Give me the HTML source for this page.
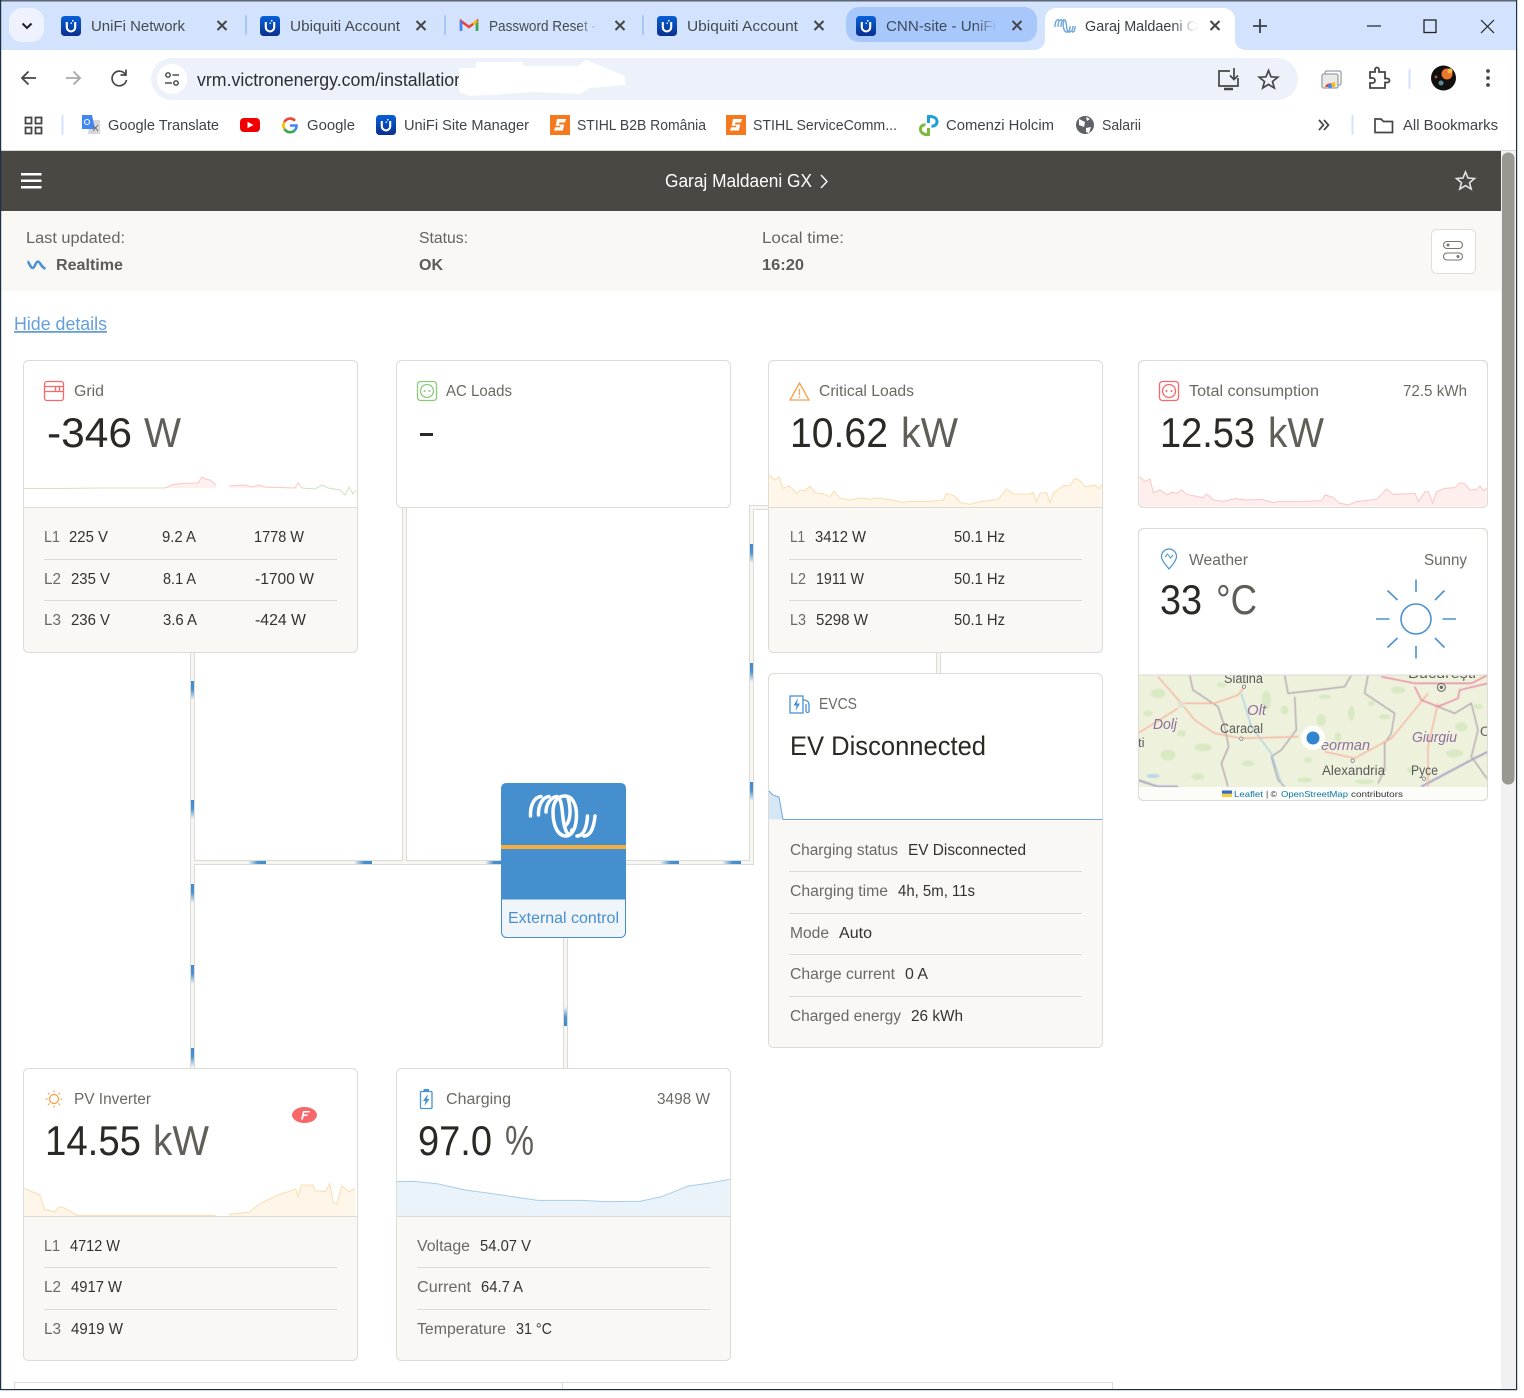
<!DOCTYPE html>
<html lang="en">
<head>
<meta charset="utf-8">
<title>Garaj Maldaeni GX</title>
<style>
html,body{margin:0;padding:0;background:#fff;width:1524px;height:1398px;overflow:hidden}
svg{display:block}
text{font-family:"Liberation Sans",Arial,sans-serif;white-space:pre}
.t{font-size:15px;fill:#444a50}
.bm{font-size:15px;fill:#3f4449}
.l{font-size:15.5px;fill:#6a6963}
.v{font-size:15.5px;fill:#33322e}
.s{font-size:16px;fill:#65645e}
.bd{font-size:16px;font-weight:bold;fill:#5c5b55}
.n{font-size:42px;fill:#2a2926}
.u{font-size:42px;fill:#5f5e58}
.m{font-size:13.5px;fill:#595959}
.mi{font-size:15px;font-style:italic;fill:#8f6f9d}
.x{stroke:#444746;stroke-width:2;fill:none}
.card{fill:#fff;stroke:#dcdbd6;stroke-width:1}
.sep{stroke:#dcdbd6;stroke-width:1}
.ic{fill:none;stroke-width:1.3}
</style>
</head>
<body>
<svg xmlns="http://www.w3.org/2000/svg" width="1524" height="1398" viewBox="0 0 1524 1398">
<defs>
<linearGradient id="ug" x1="0" y1="0" x2="0" y2="1"><stop offset="0" stop-color="#0660d8"/><stop offset="1" stop-color="#0a2f8e"/></linearGradient>
<linearGradient id="vd" x1="0" y1="0" x2="0" y2="1"><stop offset="0" stop-color="#3f8ccb"/><stop offset=".45" stop-color="#4a92d0"/><stop offset="1" stop-color="#4a92d0" stop-opacity="0"/></linearGradient>
<linearGradient id="vu" x1="0" y1="1" x2="0" y2="0"><stop offset="0" stop-color="#3f8ccb"/><stop offset=".45" stop-color="#4a92d0"/><stop offset="1" stop-color="#4a92d0" stop-opacity="0"/></linearGradient>
<linearGradient id="hd" x1="1" y1="0" x2="0" y2="0"><stop offset="0" stop-color="#3f8ccb"/><stop offset=".45" stop-color="#4a92d0"/><stop offset="1" stop-color="#4a92d0" stop-opacity="0"/></linearGradient>
<linearGradient id="f1" x1="0" y1="0" x2="1" y2="0"><stop offset="0" stop-color="#d3e3fd" stop-opacity="0"/><stop offset="1" stop-color="#d3e3fd"/></linearGradient>
<linearGradient id="f2" x1="0" y1="0" x2="1" y2="0"><stop offset="0" stop-color="#a8c7fa" stop-opacity="0"/><stop offset="1" stop-color="#a8c7fa"/></linearGradient>
<linearGradient id="f3" x1="0" y1="0" x2="1" y2="0"><stop offset="0" stop-color="#fff" stop-opacity="0"/><stop offset="1" stop-color="#fff"/></linearGradient>
<filter id="blr" x="-5%" y="-5%" width="110%" height="110%"><feGaussianBlur stdDeviation="1.4"/></filter>
<symbol id="uni" viewBox="0 0 20 20" overflow="visible">
<rect width="20" height="20" rx="3.5" fill="url(#ug)"/>
<path d="M5.8 6V11.2a4.2 4.2 0 0 0 8.4 0V6" fill="none" stroke="#fff" stroke-width="2.1"/>
<rect x="11" y="4" width="1.5" height="1.5" fill="#fff"/><rect x="9.5" y="6.500" width="1.5" height="1.5" fill="#cfe0ff"/>
</symbol>
<symbol id="st" viewBox="0 0 20 20" overflow="visible">
<rect width="20" height="20" fill="#f37a1f"/>
<path d="M7 4H16L15 7.5H9.5L9 9.5H14.2L12.8 15.5H4L5 12.2H10L10.5 10.8H5.7Z" fill="#fff"/>
</symbol>
<clipPath id="mapc"><path d="M1139 675H1487V795a5 5 0 0 1-5 5H1144a5 5 0 0 1-5-5Z"/></clipPath>
<clipPath id="urlc"><rect x="190" y="60" width="269" height="36"/></clipPath>
</defs>

<!-- window -->
<rect x="0" y="0" width="1517" height="1390" fill="#fff"/>
<rect x="0" y="0" width="1517" height="50" fill="#d3e3fd"/>
<rect x="0" y="0" width="1517" height="1.5" fill="#5d6673"/>

<!-- tabs -->
<rect x="9" y="8" width="35" height="34" rx="13" fill="#edf2fc"/>
<path d="M22.5 23.5L27 28L31.5 23.5" fill="none" stroke="#1f1f1f" stroke-width="2"/>
<rect x="846" y="7" width="191" height="35" rx="13" fill="#a8c7fa"/>
<path d="M1033 50C1040 50 1045 46 1045 40V20C1045 13 1050 8 1057 8H1223C1230 8 1235 13 1235 20V40C1235 46 1240 50 1247 50Z" fill="#fff"/>
<g fill="#a9c5f5"><rect x="245" y="15" width="2" height="20" rx="1"/><rect x="444" y="15" width="2" height="20" rx="1"/><rect x="642" y="15" width="2" height="20" rx="1"/></g>
<use href="#uni" x="61" y="16" width="20" height="20"/>
<text class="t" x="91" y="31" textLength="94" lengthAdjust="spacingAndGlyphs">UniFi Network</text>
<path class="x" d="M217.5 21L226.5 30M226.5 21L217.5 30"/>
<use href="#uni" x="260" y="16" width="20" height="20"/>
<text class="t" x="290" y="31" textLength="110" lengthAdjust="spacingAndGlyphs">Ubiquiti Account</text>
<path class="x" d="M416.5 21L425.5 30M425.5 21L416.5 30"/>
<g fill="none"><path d="M461 30V21L469 27L477 21V30" stroke="#ea4335" stroke-width="2.4"/><path d="M461 21V31" stroke="#4285f4" stroke-width="2.6"/><path d="M477 21V31" stroke="#34a853" stroke-width="2.6"/><path d="M473 24L477 21" stroke="#fbbc04" stroke-width="2.6"/></g>
<text class="t" x="489" y="31" textLength="107" lengthAdjust="spacingAndGlyphs">Password Reset -</text>
<rect x="578" y="16" width="20" height="20" fill="url(#f1)"/><rect x="597" y="16" width="11" height="20" fill="#d3e3fd"/>
<path class="x" d="M615.5 21L624.5 30M624.5 21L615.5 30"/>
<use href="#uni" x="657" y="16" width="20" height="20"/>
<text class="t" x="687" y="31" textLength="111" lengthAdjust="spacingAndGlyphs">Ubiquiti Account</text>
<path class="x" d="M814.5 21L823.5 30M823.5 21L814.5 30"/>
<use href="#uni" x="856" y="16" width="20" height="20"/>
<text class="t" x="886" y="31" textLength="110" lengthAdjust="spacingAndGlyphs" style="fill:#3c4a5c">CNN-site - UniFi</text>
<rect x="975" y="16" width="22" height="20" fill="url(#f2)"/>
<path class="x" d="M1012.5 21L1021.5 30M1021.5 21L1012.5 30"/>
<g fill="none" stroke="#6ca6da" stroke-width="1.4"><path d="M1055 27C1055 21 1057 19 1059 20"/><path d="M1058 27C1058 21 1060 19 1062 20"/><path d="M1061 27C1061 21 1063 19 1065 20C1067 22 1066 30 1068 32"/><path d="M1064 21C1062 25 1064 31 1066 32C1069 33 1070 30 1070 26"/><path d="M1069 32C1072 32 1073 29 1073 26"/><path d="M1072 32C1075 32 1075 29 1075 26"/></g>
<text class="t" x="1085" y="31" textLength="112" lengthAdjust="spacingAndGlyphs" style="fill:#3a3f44">Garaj Maldaeni C</text>
<rect x="1172" y="16" width="24" height="20" fill="url(#f3)"/>
<path class="x" d="M1210.5 21L1219.5 30M1219.5 21L1210.5 30"/>
<path d="M1260 19V33M1253 26H1267" stroke="#3a3f44" stroke-width="1.8" fill="none"/>
<path d="M1367 26H1381" stroke="#222" stroke-width="1.2"/>
<rect x="1424" y="20" width="12" height="12.500" fill="none" stroke="#222" stroke-width="1.3"/>
<path d="M1481 20L1494 33M1494 20L1481 33" stroke="#222" stroke-width="1.2"/>

<!-- toolbar -->
<path d="M1 150V58a8 8 0 0 1 8-8H1033V150Z" fill="#fff"/>
<path d="M1247 50H1508a8 8 0 0 1 8 8V150H1033V50Z" fill="#fff"/>
<path d="M36 78H22M28.5 71.5L22 78L28.5 84.5" fill="none" stroke="#444746" stroke-width="1.8"/>
<path d="M66 78H80M73.5 71.5L80 78L73.5 84.5" fill="none" stroke="#a5a7aa" stroke-width="1.8"/>
<path d="M125.5 74.5A7.3 7.3 0 1 0 126.5 80M126 69.5V75H120.5" fill="none" stroke="#444746" stroke-width="1.7"/>
<rect x="151" y="58" width="1147" height="42" rx="21" fill="#edf2fa"/>
<circle cx="172" cy="79" r="15" fill="#fff"/>
<g fill="none" stroke="#3d4043" stroke-width="1.4"><circle cx="168" cy="75" r="2.2"/><path d="M172.5 75H179"/><circle cx="176" cy="83" r="2.2"/><path d="M165 83H172"/></g>
<g clip-path="url(#urlc)"><text x="197" y="86" font-size="18" fill="#2b2f33" textLength="267" lengthAdjust="spacingAndGlyphs">vrm.victronenergy.com/installation</text></g>
<path d="M459 68H476V62H522L524 66H578L586 60L625 76V85L590 88L580 94L535 92L470 96L459 92Z" fill="#fff"/>
<g fill="none" stroke="#444746" stroke-width="1.7"><path d="M1230 71H1219V86H1238V78"/><path d="M1224 89H1233" stroke-width="2.5"/><path d="M1234 68V79M1230 75.500L1234 79.5L1238 75.5"/></g>
<path d="M1268.5 70.500L1271 76.800L1277.8 77.200L1272.5 81.500L1274.3 88L1268.5 84.400L1262.7 88L1264.5 81.500L1259.2 77.200L1266 76.800Z" fill="none" stroke="#444746" stroke-width="1.7"/>
<g fill="none" stroke="#9aa0a6" stroke-width="1.3"><rect x="1325" y="71" width="16" height="14" rx="1.5"/><rect x="1322" y="74" width="16" height="14" rx="1.5" fill="#e9e9e9"/></g>
<path d="M1325 87a5.200 5.200 0 0 1 10 0Z" fill="#ea4335"/><path d="M1330 87a5 5 0 0 1 5-5V87Z" fill="#fbbc04"/><circle cx="1330" cy="86" r="2" fill="#4285f4"/>
<path d="M1370 72H1375V69.5a2 2 0 0 1 4 0V72H1385V78.5H1387.5a2 2 0 0 1 0 4H1385V88H1370V83H1372.5a2.5 2.5 0 0 0 0-5H1370Z" fill="none" stroke="#444746" stroke-width="1.8"/>
<rect x="1408.5" y="69" width="2" height="20" rx="1" fill="#d3e3fd"/>
<ellipse cx="1443.5" cy="78" rx="12.5" ry="12.5" fill="#12100e"/>
<circle cx="1447" cy="74" r="5.5" fill="#e8762b"/><circle cx="1450" cy="71" r="2.5" fill="#f4c04a"/><circle cx="1441" cy="83" r="2.5" fill="#5a8a9a"/><circle cx="1436" cy="77" r="1.5" fill="#9b5a3a"/>
<g fill="#444746"><circle cx="1488" cy="71" r="1.9"/><circle cx="1488" cy="78" r="1.9"/><circle cx="1488" cy="85" r="1.9"/></g>

<!-- bookmarks -->
<g fill="none" stroke="#444746" stroke-width="1.8"><rect x="25.500" y="117.500" width="6" height="6"/><rect x="35.500" y="117.500" width="6" height="6"/><rect x="25.500" y="127.500" width="6" height="6"/><rect x="35.500" y="127.500" width="6" height="6"/></g>
<rect x="61.5" y="115" width="2" height="20" rx="1" fill="#d3e3fd"/>
<path d="M90 120H100V134H88Z" fill="#d5d7da"/><path d="M82 115H92L95 129H82Z" fill="#4285f4"/><circle cx="87" cy="122" r="2.5" fill="none" stroke="#fff" stroke-width="1.1"/><path d="M93 125L98 131M98 125L93 131" stroke="#777" stroke-width="1"/>
<text class="bm" x="108" y="130" textLength="111" lengthAdjust="spacingAndGlyphs">Google Translate</text>
<rect x="240" y="118" width="20" height="14" rx="4" fill="#f00000"/><path d="M247.5 121.8L253.5 125L247.5 128.2Z" fill="#fff"/>
<g fill="none" stroke-width="2.6"><path d="M295 120.8A6.5 6.5 0 0 0 284.4 122" stroke="#ea4335"/><path d="M284.4 122A6.5 6.5 0 0 0 284.5 129" stroke="#fbbc04"/><path d="M284.5 129A6.5 6.5 0 0 0 295 130" stroke="#34a853"/><path d="M295 130A6.5 6.5 0 0 0 296.5 125.5H290" stroke="#4285f4"/></g>
<text class="bm" x="307" y="130" textLength="48" lengthAdjust="spacingAndGlyphs">Google</text>
<use href="#uni" x="376" y="115" width="20" height="20"/>
<text class="bm" x="404" y="130" textLength="125" lengthAdjust="spacingAndGlyphs">UniFi Site Manager</text>
<use href="#st" x="550" y="115" width="20" height="20"/>
<text class="bm" x="577" y="130" textLength="129" lengthAdjust="spacingAndGlyphs">STIHL B2B România</text>
<use href="#st" x="726" y="115" width="20" height="20"/>
<text class="bm" x="753" y="130" textLength="144" lengthAdjust="spacingAndGlyphs">STIHL ServiceComm...</text>
<path d="M928.500 128V134.500C924 135 920.500 133 920.500 129C920.500 126 923 124.500 925.500 125" fill="none" stroke="#7dbb3f" stroke-width="3"/><path d="M928.500 123V116.500C933 116 937 118 937 121.500C937 125 934 126.500 931.500 126" fill="none" stroke="#1da0d8" stroke-width="3"/>
<text class="bm" x="946" y="130" textLength="108" lengthAdjust="spacingAndGlyphs">Comenzi Holcim</text>
<circle cx="1085" cy="125" r="9" fill="#5f6368"/><path d="M1079 119L1085 122L1084 127L1079 125ZM1086 128L1091 127L1089 133L1086 132ZM1086 117L1090 119L1087 121Z" fill="#fff"/>
<text class="bm" x="1102" y="130" textLength="39" lengthAdjust="spacingAndGlyphs">Salarii</text>
<path d="M1319 120L1323.5 125L1319 130M1324 120L1328.5 125L1324 130" fill="none" stroke="#444746" stroke-width="1.7"/>
<rect x="1351.5" y="115" width="2" height="20" rx="1" fill="#d3e3fd"/>
<path d="M1375 119H1381L1383.5 121.5H1392.5V132.5H1375Z" fill="none" stroke="#444746" stroke-width="1.7"/>
<text class="bm" x="1403" y="130" textLength="95" lengthAdjust="spacingAndGlyphs">All Bookmarks</text>

<!-- app header -->
<rect x="1" y="150" width="1516" height="1" fill="#d8d8d8"/>
<rect x="1" y="151" width="1500" height="60" fill="#494842"/>
<rect x="21" y="173" width="20.5" height="2.5" fill="#fff"/><rect x="21" y="179.5" width="20.5" height="2.5" fill="#fff"/><rect x="21" y="186" width="20.5" height="2.5" fill="#fff"/>
<text x="665" y="187" font-size="18" fill="#fff" textLength="147" lengthAdjust="spacingAndGlyphs">Garaj Maldaeni GX</text>
<path d="M821 175L827 181.5L821 188" fill="none" stroke="#fff" stroke-width="1.4"/>
<path d="M1465.5 172L1468 178L1474.5 178.5L1469.5 182.8L1471.2 189L1465.5 185.6L1459.8 189L1461.5 182.8L1456.5 178.5L1463 178Z" fill="none" stroke="#e6e5e1" stroke-width="1.6"/>

<!-- status bar -->
<rect x="1" y="211" width="1500" height="80" fill="#f9f8f5"/>
<text class="s" x="26" y="243" textLength="99" lengthAdjust="spacingAndGlyphs">Last updated:</text>
<path d="M27.5 261.5C29 262 30.500 268 32.500 268C35 268 35.500 261.500 38 261.500C40 261.500 42 268.500 45.500 268.500" fill="none" stroke="#4a92d0" stroke-width="2.600"/>
<text class="bd" x="56" y="270" textLength="67" lengthAdjust="spacingAndGlyphs">Realtime</text>
<text class="s" x="419" y="243" textLength="49" lengthAdjust="spacingAndGlyphs">Status:</text>
<text class="bd" x="419" y="270" textLength="24" lengthAdjust="spacingAndGlyphs">OK</text>
<text class="s" x="762" y="243" textLength="82" lengthAdjust="spacingAndGlyphs">Local time:</text>
<text class="bd" x="762" y="270" textLength="42" lengthAdjust="spacingAndGlyphs">16:20</text>
<rect x="1431.5" y="229.5" width="44" height="44" rx="5" fill="#fff" stroke="#dfdeda"/>
<g fill="none" stroke="#77766f" stroke-width="1.1"><rect x="1443.5" y="241.5" width="19" height="7" rx="3.5"/><rect x="1443.5" y="253" width="19" height="7" rx="3.5"/></g>
<circle cx="1448" cy="245" r="1.5" fill="#77766f"/><circle cx="1458" cy="256.5" r="1.5" fill="#77766f"/>

<text x="14" y="330" font-size="18" fill="#649fdb" textLength="93" lengthAdjust="spacingAndGlyphs" text-decoration="underline">Hide details</text>

<!-- pipes -->
<g fill="none" stroke="#dcdbd6" stroke-width="5">
<path d="M192.5 652V1068M192.5 862.5H501M404.5 507V862.5M565.5 938V1068M626 862.5H751.5V507.5H768M938.5 652V673"/>
</g>
<g fill="none" stroke="#f7f6f2" stroke-width="3">
<path d="M192.5 652V1068M192.5 862.5H501M404.5 507V862.5M565.5 938V1068M626 862.5H751.5V507.5H768M938.5 652V673"/>
</g>
<g>
<rect x="191" y="681" width="3" height="19" fill="url(#vd)"/><rect x="191" y="800" width="3" height="19" fill="url(#vd)"/><rect x="191" y="884" width="3" height="19" fill="url(#vd)"/><rect x="191" y="965" width="3" height="19" fill="url(#vd)"/><rect x="191" y="1048" width="3" height="19" fill="url(#vd)"/>
<rect x="248" y="861" width="18" height="3" fill="url(#hd)"/><rect x="354" y="861" width="18" height="3" fill="url(#hd)"/><rect x="485" y="861" width="16" height="3" fill="url(#hd)"/><rect x="660" y="861" width="19" height="3" fill="url(#hd)"/><rect x="722" y="861" width="19" height="3" fill="url(#hd)"/>
<rect x="750" y="544" width="3" height="19" fill="url(#vd)"/><rect x="750" y="663" width="3" height="19" fill="url(#vd)"/><rect x="750" y="782" width="3" height="19" fill="url(#vd)"/>
<rect x="564" y="1007" width="3" height="19" fill="url(#vu)"/>
</g>

<!-- Grid card -->
<rect class="card" x="23.5" y="360.5" width="334" height="292" rx="5"/>
<path d="M24 507.5H357V647a5 5 0 0 1-5 5H29a5 5 0 0 1-5-5Z" fill="#f9f8f5"/>
<path d="M24 507.5H357" class="sep"/>
<g class="ic" stroke="#f8686a"><rect x="44.5" y="381.5" width="19" height="19" rx="2.5"/><path d="M44.5 386.5H63.5M44.5 391.5H63.5M55.5 387V391M59.5 387V391"/></g>
<text class="l" x="74" y="396" textLength="30" lengthAdjust="spacingAndGlyphs">Grid</text>
<text class="n" x="47" y="447" textLength="85" lengthAdjust="spacingAndGlyphs">-346</text><text class="u" x="144" y="447" textLength="37" lengthAdjust="spacingAndGlyphs">W</text>
<path d="M165 488L172 485L180 483.5L198 483L202 477L205 479L210 480L216 485V488ZM229 488V486L243 485L252 487L259 485L265 487L295 488Z" fill="#fdf0ef"/>
<g fill="none" stroke-width="1"><path d="M24 488.5L60 488.5L100 488L165 488" stroke="#e0dcc2"/><path d="M165 488L172 485L180 483.5L198 483L202 477L205 479L210 480L216 485M229 486L243 485L252 487L259 485L265 487L295 488L298 483L302 488" stroke="#f9c8c4"/><path d="M302 488L315 489L322 485L328 488L340 490L345 495L349 487L353 494L356 490" stroke="#cfe2bd"/></g>
<text class="l" x="44" y="542" textLength="16" lengthAdjust="spacingAndGlyphs">L1</text><text class="v" x="69" y="542" textLength="39" lengthAdjust="spacingAndGlyphs">225 V</text><text class="v" x="162" y="542" textLength="34" lengthAdjust="spacingAndGlyphs">9.2 A</text><text class="v" x="254" y="542" textLength="50" lengthAdjust="spacingAndGlyphs">1778 W</text>
<path class="sep" d="M44 559.5H337M44 600.5H337"/>
<text class="l" x="44" y="584" textLength="17" lengthAdjust="spacingAndGlyphs">L2</text><text class="v" x="71" y="584" textLength="39" lengthAdjust="spacingAndGlyphs">235 V</text><text class="v" x="163" y="584" textLength="33" lengthAdjust="spacingAndGlyphs">8.1 A</text><text class="v" x="255" y="584" textLength="59" lengthAdjust="spacingAndGlyphs">-1700 W</text>
<text class="l" x="44" y="625" textLength="17" lengthAdjust="spacingAndGlyphs">L3</text><text class="v" x="71" y="625" textLength="39" lengthAdjust="spacingAndGlyphs">236 V</text><text class="v" x="163" y="625" textLength="34" lengthAdjust="spacingAndGlyphs">3.6 A</text><text class="v" x="255" y="625" textLength="51" lengthAdjust="spacingAndGlyphs">-424 W</text>

<!-- AC loads -->
<rect class="card" x="396.5" y="360.5" width="334" height="147" rx="5"/>
<g class="ic" stroke="#8dc97a"><rect x="417.5" y="381.5" width="19" height="19" rx="3"/><circle cx="427" cy="391" r="6.5"/></g><circle cx="424.5" cy="391" r="1" fill="#8dc97a"/><circle cx="429.5" cy="391" r="1" fill="#8dc97a"/>
<text class="l" x="446" y="396" textLength="66" lengthAdjust="spacingAndGlyphs">AC Loads</text>
<rect x="420" y="433" width="13" height="3" fill="#2a2926"/>

<!-- Critical loads -->
<rect class="card" x="768.5" y="360.5" width="334" height="292" rx="5"/>
<path d="M769 507.5H1102V647a5 5 0 0 1-5 5H774a5 5 0 0 1-5-5Z" fill="#f9f8f5"/>
<g transform="translate(760 350) scale(.33333)"><path d="M27 375L45 390L58 380L68 415L88 408L110 430L120 420L135 422L150 408L165 428L190 432L210 440L222 423L240 445L270 450L300 444L330 448L350 444L395 450L430 458L440 454L510 454L550 450L560 430L585 438L600 458L630 463L655 456L715 448L740 417L760 432L805 433L820 428L830 456L840 430L860 428L870 458L880 430L910 407L930 407L945 385L960 392L975 410L1005 406L1017 416L1025 403V472H27Z" fill="#fff6ea"/><path d="M27 375L45 390L58 380L68 415L88 408L110 430L120 420L135 422L150 408L165 428L190 432L210 440L222 423L240 445L270 450L300 444L330 448L350 444L395 450L430 458L440 454L510 454L550 450L560 430L585 438L600 458L630 463L655 456L715 448L740 417L760 432L805 433L820 428L830 456L840 430L860 428L870 458L880 430L910 407L930 407L945 385L960 392L975 410L1005 406L1017 416L1025 403" fill="none" stroke="#fcdcae" stroke-width="3"/></g>
<path d="M769 507.5H1102" class="sep"/>
<g class="ic" stroke="#f7a24b"><path d="M799.5 383L809 400H790Z"/><path d="M799.5 389V395M799.5 396.5V398"/></g>
<text class="l" x="819" y="396" textLength="95" lengthAdjust="spacingAndGlyphs">Critical Loads</text>
<text class="n" x="790" y="447" textLength="98" lengthAdjust="spacingAndGlyphs">10.62</text><text class="u" x="901" y="447" textLength="57" lengthAdjust="spacingAndGlyphs">kW</text>
<text class="l" x="790" y="542" textLength="15" lengthAdjust="spacingAndGlyphs">L1</text><text class="v" x="815" y="542" textLength="51" lengthAdjust="spacingAndGlyphs">3412 W</text><text class="v" x="954" y="542" textLength="51" lengthAdjust="spacingAndGlyphs">50.1 Hz</text>
<path class="sep" d="M789 559.5H1082M789 600.5H1082"/>
<text class="l" x="790" y="584" textLength="16" lengthAdjust="spacingAndGlyphs">L2</text><text class="v" x="816" y="584" textLength="48" lengthAdjust="spacingAndGlyphs">1911 W</text><text class="v" x="954" y="584" textLength="51" lengthAdjust="spacingAndGlyphs">50.1 Hz</text>
<text class="l" x="790" y="625" textLength="16" lengthAdjust="spacingAndGlyphs">L3</text><text class="v" x="816" y="625" textLength="52" lengthAdjust="spacingAndGlyphs">5298 W</text><text class="v" x="954" y="625" textLength="51" lengthAdjust="spacingAndGlyphs">50.1 Hz</text>

<!-- EVCS -->
<rect class="card" x="768.5" y="673.5" width="334" height="374" rx="5"/>
<path d="M769 820H1102V1042a5 5 0 0 1-5 5H774a5 5 0 0 1-5-5Z" fill="#f9f8f5"/>
<path d="M769 791L773 795L779 797L783 819.5H769Z" fill="#d6e6f5"/>
<path d="M769 791L773 795L779 797L783 819.5H1102" fill="none" stroke="#6fa8dc" stroke-width="1"/>
<g class="ic" stroke="#4a92d0"><rect x="790" y="696" width="13" height="17"/><path d="M803.5 700C807 700 809 702 809 705V711a1.5 1.5 0 0 1-3 0V704"/></g><path d="M798 698L793.5 705.5H796.5L795.5 711L800 703.5H797Z" fill="#4a92d0"/>
<text class="l" x="819" y="709" textLength="38" lengthAdjust="spacingAndGlyphs">EVCS</text>
<text x="790" y="755" font-size="26.5" fill="#2a2926" textLength="196" lengthAdjust="spacingAndGlyphs">EV Disconnected</text>
<text class="l" x="790" y="855" textLength="108" lengthAdjust="spacingAndGlyphs">Charging status</text><text class="v" x="908" y="855" textLength="118" lengthAdjust="spacingAndGlyphs">EV Disconnected</text>
<text class="l" x="790" y="896" textLength="98" lengthAdjust="spacingAndGlyphs">Charging time</text><text class="v" x="898" y="896" textLength="77" lengthAdjust="spacingAndGlyphs">4h, 5m, 11s</text>
<text class="l" x="790" y="938" textLength="39" lengthAdjust="spacingAndGlyphs">Mode</text><text class="v" x="839" y="938" textLength="33" lengthAdjust="spacingAndGlyphs">Auto</text>
<text class="l" x="790" y="979" textLength="105" lengthAdjust="spacingAndGlyphs">Charge current</text><text class="v" x="905" y="979" textLength="23" lengthAdjust="spacingAndGlyphs">0 A</text>
<text class="l" x="790" y="1021" textLength="111" lengthAdjust="spacingAndGlyphs">Charged energy</text><text class="v" x="911" y="1021" textLength="52" lengthAdjust="spacingAndGlyphs">26 kWh</text>
<path class="sep" d="M789 871.5H1082M789 913.5H1082M789 954.5H1082M789 996.5H1082"/>

<!-- Total -->
<rect class="card" x="1138.5" y="360.5" width="349" height="147" rx="5"/>
<g transform="translate(1130 360) scale(.33333)"><path d="M28 350L45 365L60 357L70 398L90 390L112 405L125 397L140 400L155 390L170 403L195 408L218 413L230 402L250 420L280 424L315 416L345 420L395 418L430 428L450 424L520 424L575 422L585 405L610 412L625 428L655 435L680 425L740 418L770 387L790 403L855 400L865 425L885 395L895 395L908 430L920 395L945 385L975 383L990 368L1005 372L1020 390L1040 388L1050 378L1060 392L1070 385V426a14 14 0 0 1-14 14H42a14 14 0 0 1-14-14Z" fill="#feefee"/><path d="M28 350L45 365L60 357L70 398L90 390L112 405L125 397L140 400L155 390L170 403L195 408L218 413L230 402L250 420L280 424L315 416L345 420L395 418L430 428L450 424L520 424L575 422L585 405L610 412L625 428L655 435L680 425L740 418L770 387L790 403L855 400L865 425L885 395L895 395L908 430L920 395L945 385L975 383L990 368L1005 372L1020 390L1040 388L1050 378L1060 392L1070 385" fill="none" stroke="#fbc6c2" stroke-width="3"/></g>
<rect x="1138.5" y="360.5" width="349" height="147" rx="5" fill="none" stroke="#dcdbd6"/>
<g class="ic" stroke="#f8686a"><rect x="1159.5" y="381.5" width="19" height="19" rx="3"/><circle cx="1169" cy="391" r="6.5"/></g><circle cx="1166.5" cy="391" r="1" fill="#f8686a"/><circle cx="1171.5" cy="391" r="1" fill="#f8686a"/>
<text class="l" x="1189" y="396" textLength="130" lengthAdjust="spacingAndGlyphs">Total consumption</text>
<text class="l" x="1403" y="396" textLength="64" lengthAdjust="spacingAndGlyphs">72.5 kWh</text>
<text class="n" x="1160" y="447" textLength="95" lengthAdjust="spacingAndGlyphs">12.53</text><text class="u" x="1268" y="447" textLength="56" lengthAdjust="spacingAndGlyphs">kW</text>

<!-- Weather -->
<rect class="card" x="1138.5" y="528.5" width="349" height="272" rx="5"/>
<path d="M1169 569C1165 564 1161.5 560 1161.5 556.5a7.500 7.500 0 0 1 15 0C1176.5 560 1173 564 1169 569Z" fill="none" stroke="#4a92d0" stroke-width="1.2"/>
<path d="M1165 557L1167.5 554L1170.5 558L1173 555" fill="none" stroke="#4a92d0" stroke-width="1"/>
<text class="l" x="1189" y="565" textLength="59" lengthAdjust="spacingAndGlyphs">Weather</text>
<text class="l" x="1424" y="565" textLength="43" lengthAdjust="spacingAndGlyphs">Sunny</text>
<text class="n" x="1160" y="614" textLength="42" lengthAdjust="spacingAndGlyphs">33</text><text class="u" x="1216" y="614" textLength="41" lengthAdjust="spacingAndGlyphs">°C</text>
<g fill="none" stroke="#4a92d0" stroke-width="1.6"><circle cx="1416" cy="619" r="15"/><path d="M1416 579.5V592M1416 646V658.5M1376 619H1389.5M1442.5 619H1456M1387.5 590.5L1397.5 600M1444.5 590.5L1435 600M1387.5 647.5L1397.5 638M1444.5 647.5L1435 638"/></g>

<!-- map -->
<g clip-path="url(#mapc)">
<rect x="1139" y="675" width="349" height="126" fill="#eef1dc"/>
<g transform="translate(1138 670) scale(.33333)" filter="url(#blr)">
<g fill="#d9e9c4">
<ellipse cx="195" cy="232" rx="26" ry="12"/><ellipse cx="90" cy="255" rx="22" ry="16"/><ellipse cx="560" cy="80" rx="18" ry="7"/><ellipse cx="740" cy="140" rx="18" ry="8"/><ellipse cx="640" cy="130" rx="10" ry="22"/><ellipse cx="385" cy="90" rx="14" ry="28"/><ellipse cx="60" cy="70" rx="22" ry="14"/><ellipse cx="950" cy="250" rx="26" ry="12"/><ellipse cx="550" cy="150" rx="14" ry="18"/><ellipse cx="780" cy="60" rx="22" ry="10"/><ellipse cx="180" cy="320" rx="20" ry="10"/><ellipse cx="500" cy="330" rx="22" ry="8"/><ellipse cx="680" cy="335" rx="30" ry="7"/><ellipse cx="970" cy="170" rx="18" ry="14"/>
<ellipse cx="30" cy="130" rx="14" ry="9"/><ellipse cx="250" cy="45" rx="14" ry="7"/><ellipse cx="330" cy="280" rx="18" ry="9"/><ellipse cx="600" cy="200" rx="10" ry="14"/><ellipse cx="700" cy="100" rx="10" ry="9"/><ellipse cx="820" cy="300" rx="14" ry="9"/><ellipse cx="440" cy="120" rx="12" ry="14"/><ellipse cx="130" cy="190" rx="14" ry="10"/><ellipse cx="510" cy="270" rx="12" ry="8"/><ellipse cx="1020" cy="110" rx="14" ry="8"/>
</g>
<ellipse cx="45" cy="318" rx="20" ry="6" fill="#b7d8e8"/>
<g fill="none" stroke="#a89aa8" stroke-width="3.5">
<path d="M155 15L165 60L240 110L260 170L272 230L250 280L270 350"/><path d="M440 15L450 70L540 60L620 50L640 15"/><path d="M470 80L475 180L430 240L400 260L420 330L440 350"/><path d="M690 15L680 70L770 130L760 190L740 220L740 300L720 340"/><path d="M850 90L950 130L1000 100L1020 180L1000 260L1050 330"/>
</g>
<path d="M310 70L340 170L400 250L430 340" fill="none" stroke="#a8d2e4" stroke-width="4"/>
<path d="M0 330L60 350H120M850 350L1000 270L1050 245" fill="none" stroke="#aba6c4" stroke-width="6"/>
<g fill="none" stroke="#f5b29c" stroke-width="4">
<path d="M60 20L130 100L170 150L230 190L310 205L480 200M0 190L120 115"/><path d="M130 100L230 100L300 75L320 50"/><path d="M560 245L650 265L760 205L830 120L870 70"/><path d="M900 100L870 230L870 350"/>
</g>
<g fill="none" stroke="#e8809f" stroke-width="4"><path d="M730 20L830 40L1000 40L1050 15"/><path d="M830 50L850 90L900 110L960 85L965 60L1050 40"/></g>
<rect x="120" y="95" width="20" height="18" fill="#e6dfd2"/>
</g>
<g transform="translate(1138 670) scale(.33333)">
<g fill="#fff" stroke="#777" stroke-width="2.5"><circle cx="318" cy="50" r="5"/><circle cx="310" cy="206" r="5"/><circle cx="644" cy="272" r="5"/><circle cx="858" cy="326" r="5"/></g>
<circle cx="910" cy="52" r="12" fill="none" stroke="#666" stroke-width="3"/><circle cx="910" cy="52" r="5" fill="#666"/>
</g>
<text class="m" x="1224" y="683" textLength="39" lengthAdjust="spacingAndGlyphs">Slatina</text>
<text class="m" x="1408" y="678" textLength="68" lengthAdjust="spacingAndGlyphs">București</text>
<text class="mi" x="1247" y="715" textLength="19" lengthAdjust="spacingAndGlyphs">Olt</text>
<text class="mi" x="1153" y="729" textLength="24" lengthAdjust="spacingAndGlyphs">Dolj</text>
<text class="m" x="1220" y="733" textLength="43" lengthAdjust="spacingAndGlyphs">Caracal</text>
<text x="1138" y="747" font-size="13" fill="#5b5b5b">ti</text>
<text class="mi" x="1321" y="750" textLength="49" lengthAdjust="spacingAndGlyphs">eorman</text>
<text class="m" x="1322" y="775" textLength="63" lengthAdjust="spacingAndGlyphs">Alexandria</text>
<text class="mi" x="1412" y="742" textLength="45" lengthAdjust="spacingAndGlyphs">Giurgiu</text>
<text class="m" x="1411" y="775" textLength="27" lengthAdjust="spacingAndGlyphs">Pyce</text>
<text class="m" x="1480" y="736">O</text>
<rect x="1139" y="787" width="349" height="14" fill="#fff" fill-opacity=".82"/>
<rect x="1222" y="790.5" width="10" height="3.3" fill="#3568c4"/><rect x="1222" y="793.8" width="10" height="3.3" fill="#f6cf3a"/>
<text x="1234" y="797" font-size="8.500" fill="#0a78a8" textLength="29" lengthAdjust="spacingAndGlyphs">Leaflet</text>
<text x="1266" y="797" font-size="8.500" fill="#333">| ©</text>
<text x="1281" y="797" font-size="8.500" fill="#0a78a8" textLength="67" lengthAdjust="spacingAndGlyphs">OpenStreetMap</text>
<text x="1351" y="797" font-size="8.500" fill="#333" textLength="52" lengthAdjust="spacingAndGlyphs">contributors</text>
<circle cx="1313" cy="738" r="12" fill="#fff"/><circle cx="1313" cy="738" r="6.5" fill="#2f86cf"/>
</g>
<rect x="1138.5" y="528.5" width="349" height="272" rx="5" fill="none" stroke="#dcdbd6"/>
<path d="M1139 675H1487" stroke="#dcdbd6"/>

<!-- Controller -->
<path d="M501 788a5 5 0 0 1 5-5H621a5 5 0 0 1 5 5V899H501Z" fill="#458fce"/>
<rect x="501" y="845" width="125" height="4" fill="#f8ac3b"/>
<path d="M501.5 899H625.5V932.5a5 5 0 0 1-5 5H506.5a5 5 0 0 1-5-5Z" fill="#f0f5fa" stroke="#458fce"/>
<text x="508" y="923" font-size="15.5" fill="#4790d0" textLength="111" lengthAdjust="spacingAndGlyphs">External control</text>
<g fill="none" stroke="#fff" stroke-linecap="round" stroke-width="3.5">
<path d="M530.5 816C530 806 534 797 541 796.5"/><path d="M538.5 815C538 805 543 797 549 796.5"/><path d="M546 812C546 804 551 797 557 796.500"/>
<path d="M553 812C553 800 559 796 565 796C573 796 576.500 806 576.500 815C576.500 828 572 836 566 836C558 836 553 826 553 812"/>
<path d="M560 800C563 806 562 820 565 828C567 835 571 837 572 830"/>
<path d="M568 798C571 808 571 820 566 825"/>
<path d="M577 836C584 836 587 826 587.500 816"/><path d="M584 836C591 836 594 826 595 816"/>
</g>

<!-- PV -->
<rect class="card" x="23.5" y="1068.5" width="334" height="292" rx="5"/>
<path d="M24 1216.5H357V1355a5 5 0 0 1-5 5H29a5 5 0 0 1-5-5Z" fill="#f9f8f5"/>
<g transform="translate(0 1060) scale(.4847 .33333)">
<path d="M50 385L82 405L92 448L112 456L122 441L130 442L160 466L445 466V468H50Z" fill="#fff6ea"/>
<path d="M472 463L515 456L535 432L570 407L610 387L615 410L622 375L645 375L650 392L672 395L680 370L688 428L695 433L705 378L720 395L733 385V468H472Z" fill="#fff6ea"/>
<g fill="none" stroke="#fcdcae" stroke-width="1">
<path vector-effect="non-scaling-stroke" d="M50 385L82 405L92 448L112 456L122 441L130 442L160 466L445 466"/>
<path vector-effect="non-scaling-stroke" d="M472 463L515 456L535 432L570 407L610 387L615 410L622 375L645 375L650 392L672 395L680 370L688 428L695 433L705 378L720 395L733 385"/>
</g>
</g>
<path class="sep" d="M24 1216.5H357"/>
<circle cx="54" cy="1099" r="4.5" fill="none" stroke="#f7a24b" stroke-width="1.3"/>
<path d="M54 1090.5V1092.5M54 1105.5V1107.5M45.5 1099H47.5M60.5 1099H62.5M48 1093L49.5 1094.5M60 1093L58.5 1094.5M48 1105L49.5 1103.5M60 1105L58.5 1103.5" stroke="#f7a24b" stroke-width="1.2"/>
<text class="l" x="74" y="1104" textLength="77" lengthAdjust="spacingAndGlyphs">PV Inverter</text>
<ellipse cx="304.5" cy="1115" rx="12.5" ry="8" fill="#f8686a"/>
<path d="M301 1119.5L303 1111H310L309.5 1112.5H304.5L304 1114.5H308L307.5 1116H303.7L303 1119.5Z" fill="#fff"/>
<text class="n" x="45" y="1155" textLength="96" lengthAdjust="spacingAndGlyphs">14.55</text><text class="u" x="153" y="1155" textLength="56" lengthAdjust="spacingAndGlyphs">kW</text>
<text class="l" x="44" y="1251" textLength="16" lengthAdjust="spacingAndGlyphs">L1</text><text class="v" x="70" y="1251" textLength="50" lengthAdjust="spacingAndGlyphs">4712 W</text>
<text class="l" x="44" y="1292" textLength="17" lengthAdjust="spacingAndGlyphs">L2</text><text class="v" x="71" y="1292" textLength="51" lengthAdjust="spacingAndGlyphs">4917 W</text>
<text class="l" x="44" y="1334" textLength="17" lengthAdjust="spacingAndGlyphs">L3</text><text class="v" x="71" y="1334" textLength="52" lengthAdjust="spacingAndGlyphs">4919 W</text>
<path class="sep" d="M44 1267.5H337M44 1309.5H337"/>

<!-- Charging -->
<rect class="card" x="396.5" y="1068.5" width="334" height="292" rx="5"/>
<path d="M397 1216.5H730V1355a5 5 0 0 1-5 5H402a5 5 0 0 1-5-5Z" fill="#f9f8f5"/>
<g transform="translate(0 1060) scale(.4847 .33333)"><path d="M819 365L855 364L905 372L960 390L1030 404L1110 421L1200 421L1250 425L1320 424L1365 410L1420 378L1460 370L1505 358V468H819Z" fill="#ebf3fa"/><path vector-effect="non-scaling-stroke" d="M819 365L855 364L905 372L960 390L1030 404L1110 421L1200 421L1250 425L1320 424L1365 410L1420 378L1460 370L1505 358" fill="none" stroke="#a9cde9" stroke-width="1"/></g>
<path class="sep" d="M397 1216.5H730"/>
<rect x="420.5" y="1091.5" width="11.5" height="17" rx="1" fill="none" stroke="#4a92d0" stroke-width="1.3"/><rect x="423.5" y="1089" width="5.5" height="2.5" fill="#4a92d0"/>
<path d="M428 1094L423 1101H425.5L424.5 1106L429.5 1099H427Z" fill="#4a92d0"/>
<text class="l" x="446" y="1104" textLength="65" lengthAdjust="spacingAndGlyphs">Charging</text>
<text class="l" x="657" y="1104" textLength="53" lengthAdjust="spacingAndGlyphs">3498 W</text>
<text class="n" x="418" y="1155" textLength="74" lengthAdjust="spacingAndGlyphs">97.0</text><text class="u" x="505" y="1155" textLength="29" lengthAdjust="spacingAndGlyphs">%</text>
<text class="l" x="417" y="1251" textLength="53" lengthAdjust="spacingAndGlyphs">Voltage</text><text class="v" x="480" y="1251" textLength="51" lengthAdjust="spacingAndGlyphs">54.07 V</text>
<text class="l" x="417" y="1292" textLength="54" lengthAdjust="spacingAndGlyphs">Current</text><text class="v" x="481" y="1292" textLength="42" lengthAdjust="spacingAndGlyphs">64.7 A</text>
<text class="l" x="417" y="1334" textLength="89" lengthAdjust="spacingAndGlyphs">Temperature</text><text class="v" x="516" y="1334" textLength="36" lengthAdjust="spacingAndGlyphs">31 °C</text>
<path class="sep" d="M417 1267.5H710M417 1309.5H710"/>

<!-- bottom cards -->
<path d="M14.5 1389V1382.5H1112.5V1389M562.5 1382.5V1389" fill="none" stroke="#dcdbd6"/>

<!-- scrollbar -->
<rect x="1501" y="151" width="15" height="1238" fill="#f1f1f1"/>
<rect x="1502" y="152.5" width="12.5" height="632" rx="6" fill="#989791"/>

<!-- window borders -->
<rect x="0" y="0" width="1.2" height="1390" fill="#1e3045"/>
<rect x="1516" y="0" width="1.2" height="1390" fill="#1e3045"/>
<rect x="0" y="1389" width="1517" height="1.2" fill="#1e3045"/>
</svg>
</body>
</html>
